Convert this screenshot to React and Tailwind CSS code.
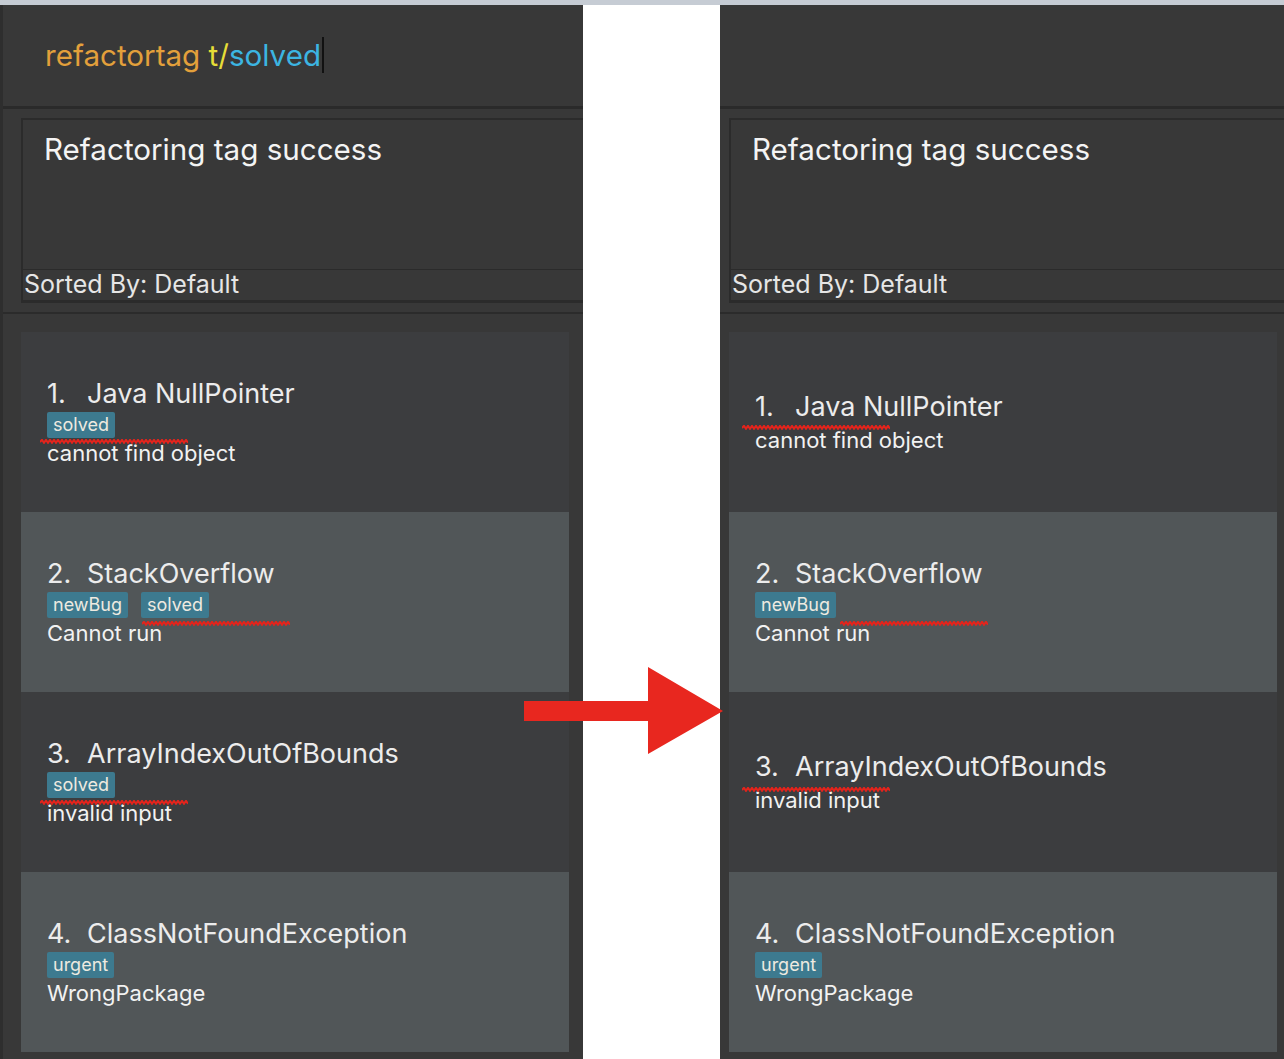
import React from "react";

const FONT = { fontFamily: "Inter, 'Noto Sans', sans-serif" };

const leftCards = [
  { n: "1.", title: "Java NullPointer", tags: ["solved"], desc: "cannot find object" },
  { n: "2.", title: "StackOverflow", tags: ["newBug", "solved"], desc: "Cannot run" },
  { n: "3.", title: "ArrayIndexOutOfBounds", tags: ["solved"], desc: "invalid input" },
  { n: "4.", title: "ClassNotFoundException", tags: ["urgent"], desc: "WrongPackage" },
];

const rightCards = [
  { n: "1.", title: "Java NullPointer", tags: [], desc: "cannot find object" },
  { n: "2.", title: "StackOverflow", tags: ["newBug"], desc: "Cannot run" },
  { n: "3.", title: "ArrayIndexOutOfBounds", tags: [], desc: "invalid input" },
  { n: "4.", title: "ClassNotFoundException", tags: ["urgent"], desc: "WrongPackage" },
];

function Card({ card, i }) {
  const bg = i % 2 === 0 ? "bg-[#3c3d3f]" : "bg-[#515658]";
  return (
    <div className={`w-[548px] h-[180px] shrink-0 ${bg} flex flex-col justify-center pl-[26px]`}>
      <div className="flex text-[27px] leading-[31px] text-[#ececec] whitespace-nowrap">
        <span className="inline-block w-[40px]">{card.n}</span>
        <span>{card.title}</span>
      </div>
      <div className="flex gap-[13px] pt-[3px] pb-[2px]">
        {card.tags.map((t) => (
          <span
            key={t}
            className="h-[26px] px-[6px] rounded-[2px] bg-[#3d7a8f] text-[#eeeae0] text-[18px] leading-[26px]"
          >
            {t}
          </span>
        ))}
      </div>
      <div className="text-[22px] leading-[26px] text-[#f2f2f2] whitespace-nowrap">{card.desc}</div>
    </div>
  );
}

function Panel({ command, cards }) {
  return (
    <div className="w-[583px] h-full shrink-0 bg-[#383838] border-l-[3px] border-[#2e2e2e] flex flex-col overflow-hidden" style={FONT}>
      <div className="h-[101px] shrink-0 flex items-center pl-[42px] text-[29.6px] whitespace-nowrap">
        {command}
      </div>
      <div className="h-[3px] shrink-0 bg-[#2a2a2a]" />
      <div className="pt-[9px] pl-[18px] shrink-0">
        <div className="w-[620px] h-[185px] border-t-2 border-l-2 border-b-[3px] border-[#2b2b2b] flex flex-col">
          <div className="flex-1 pl-[21px] pt-[12px] text-[29.6px] leading-[34px] text-[#f4f4f4] whitespace-nowrap">
            Refactoring tag success
          </div>
          <div className="h-[31px] border-t border-[#2b2b2b] pl-[1px] flex items-center text-[25px] text-[#e6e6e6] whitespace-nowrap">
            Sorted By: Default
          </div>
        </div>
      </div>
      <div className="h-[9px] shrink-0" />
      <div className="h-[2px] shrink-0 bg-[#2b2b2b]" />
      <div className="pt-[18px] pl-[18px] flex flex-col">
        {cards.map((c, i) => (
          <Card key={i} card={c} i={i} />
        ))}
      </div>
    </div>
  );
}

function Squiggle({ x, y }) {
  let d = "M0 3";
  for (let i = 1; i <= 74; i++) {
    d += ` L${i * 2} ${i % 2 ? 0.8 : 3.8}`;
  }
  return (
    <svg className="absolute" style={{ left: x, top: y - 2 }} width="148" height="5" viewBox="0 0 148 5">
      <path d={d} fill="none" stroke="#e3241c" strokeWidth="2" />
    </svg>
  );
}

export default function App() {
  const command = (
    <span className="flex items-center">
      <span className="text-[#e3a03b]">refactortag</span>
      <span className="text-[#e6dd37]">&nbsp;t/</span>
      <span className="text-[#3cb5e2]">solved</span>
      <span className="inline-block w-[2px] h-[36px] bg-[#111] ml-[1px]" />
    </span>
  );
  return (
    <div className="relative w-[1284px] h-[1059px] bg-white overflow-hidden">
      <div className="h-[5px] bg-[#c6ccd4]" />
      <div className="flex h-[1054px]">
        <Panel command={command} cards={leftCards} />
        <div className="w-[137px] shrink-0 bg-white" />
        <div className="w-[564px] h-full overflow-hidden shrink-0">
          <div className="ml-[-12px] h-full">
            <Panel command={null} cards={rightCards} />
          </div>
        </div>
      </div>
      <svg className="absolute left-[524px] top-[667px]" width="200" height="88" viewBox="0 0 200 88">
        <polygon points="0,34 124,34 124,0 199,44 124,87 124,54 0,54" fill="#e8271f" />
      </svg>
      <Squiggle x={40} y={441} />
      <Squiggle x={142} y={623} />
      <Squiggle x={40} y={802} />
      <Squiggle x={742} y={427} />
      <Squiggle x={840} y={623} />
      <Squiggle x={742} y={789} />
    </div>
  );
}
